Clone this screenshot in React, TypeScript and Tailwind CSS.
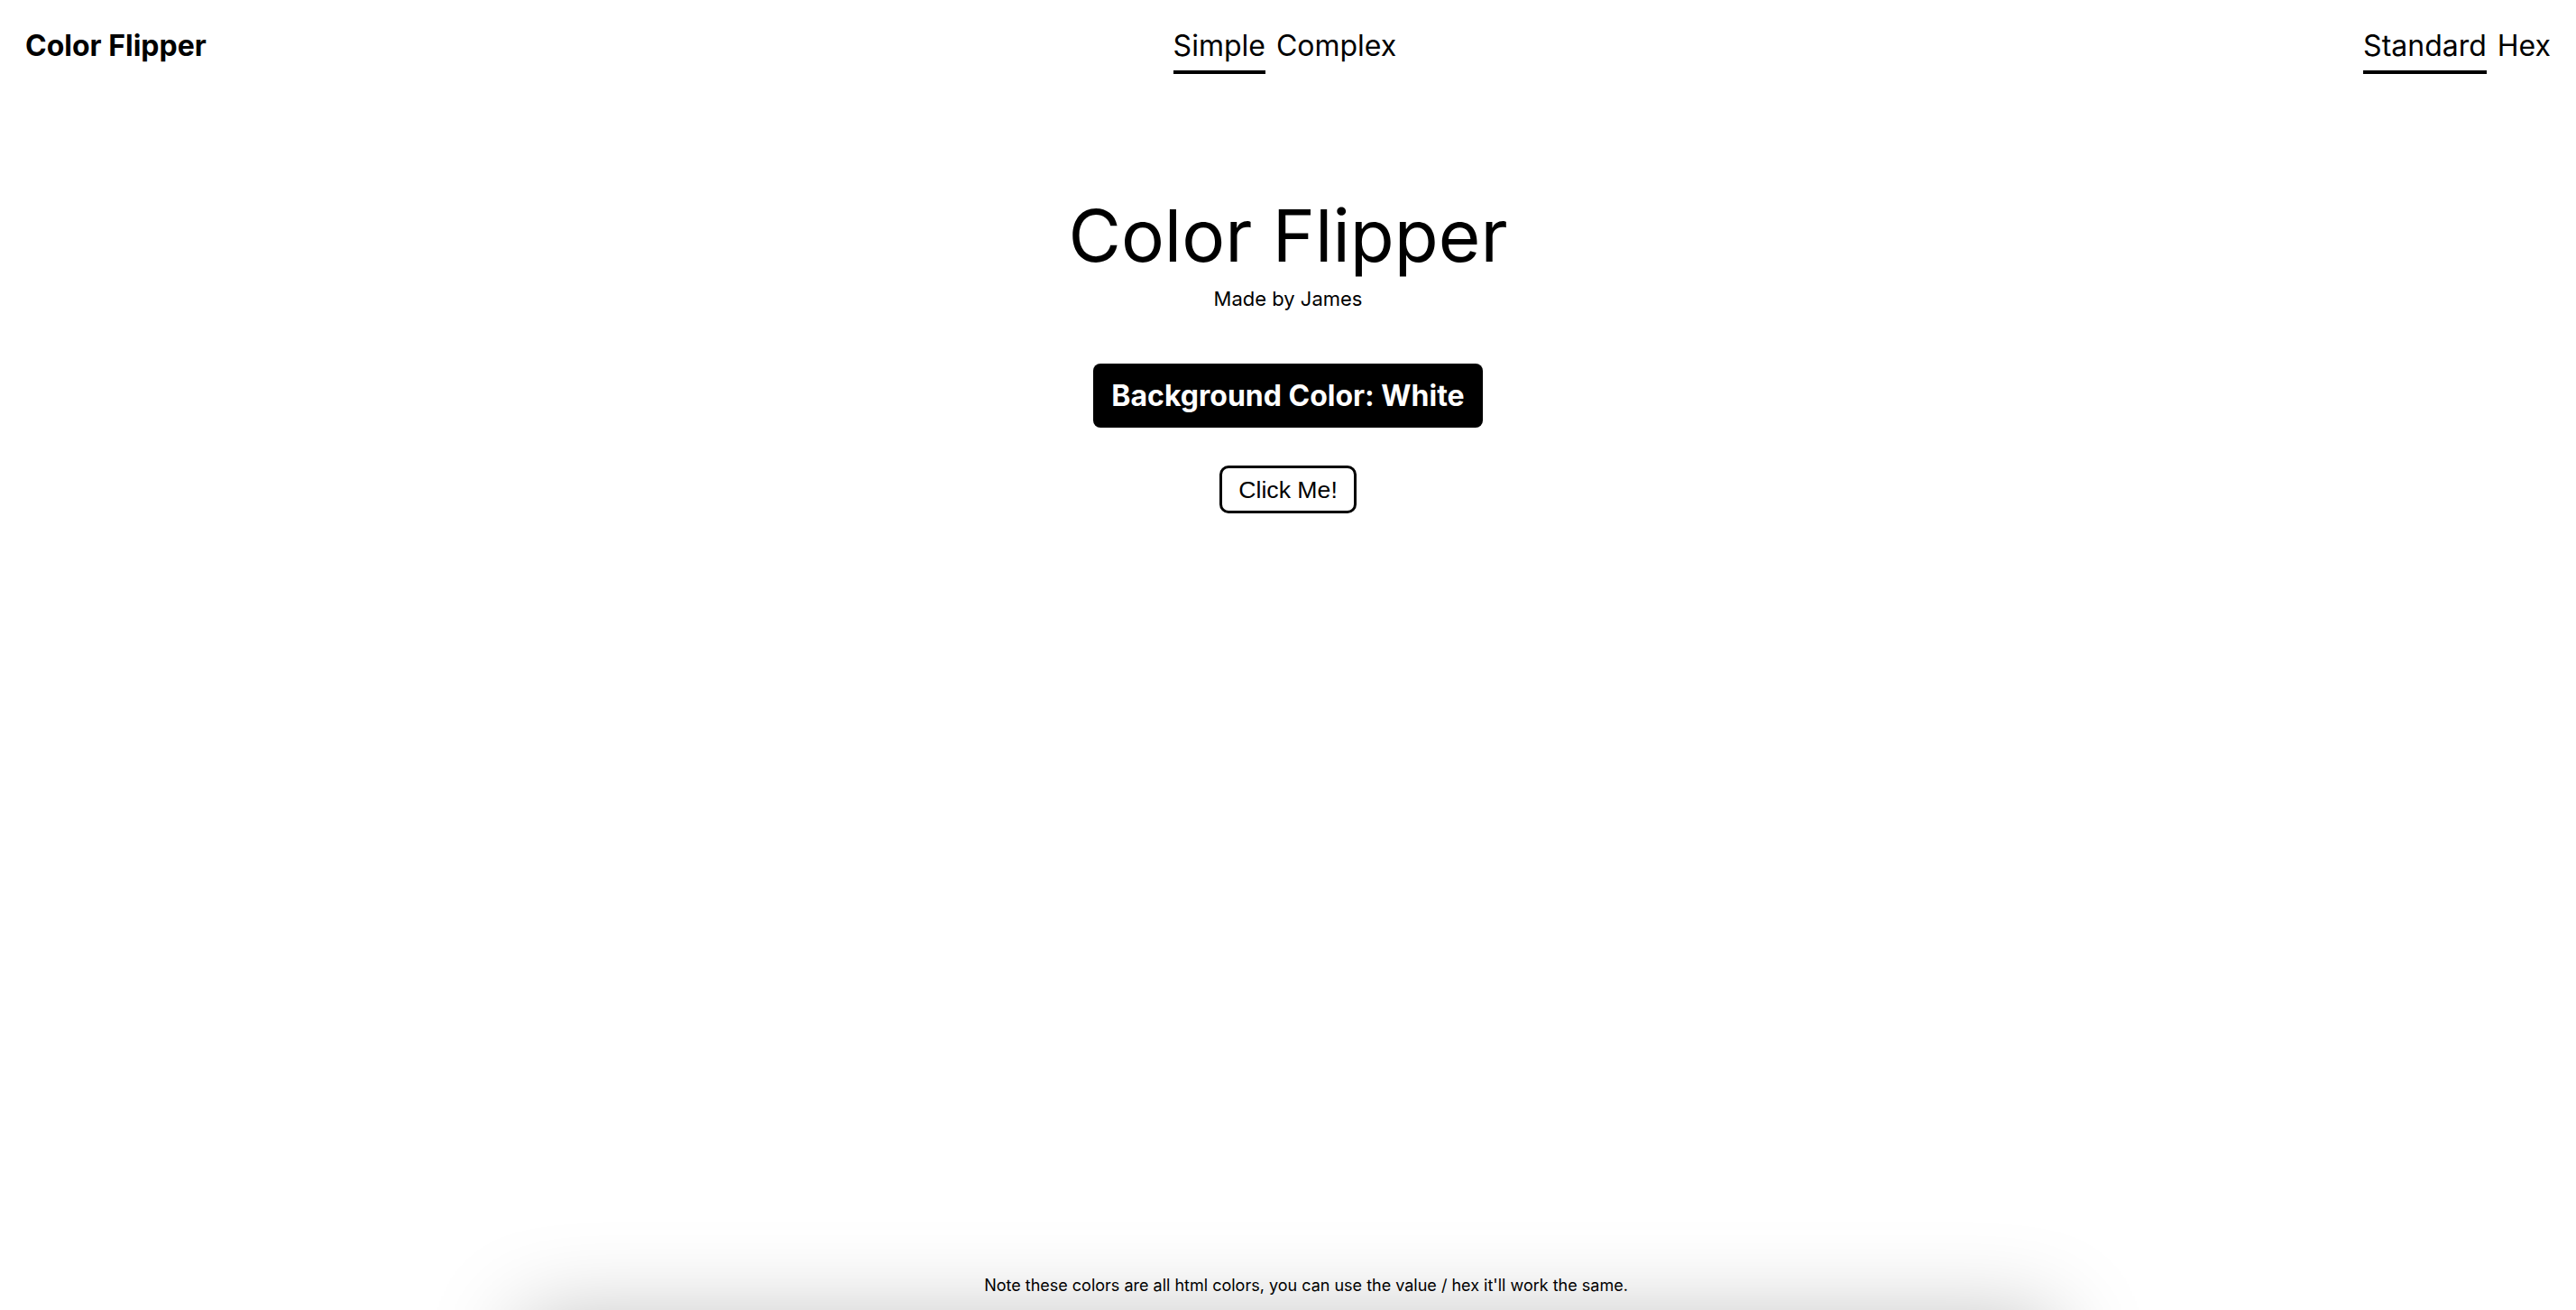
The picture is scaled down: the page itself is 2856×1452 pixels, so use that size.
import React, { useState } from 'react';

const colors = ['White', 'Black', 'Red', 'Green', 'Blue', 'Orange', 'Purple'];

const NavTab = ({
  label,
  active,
  onClick,
}: {
  label: string;
  active: boolean;
  onClick: () => void;
}) => (
  <button
    onClick={onClick}
    className={`text-[32px] leading-[48px] pb-[3px] border-b-4 ${
      active ? 'border-black' : 'border-transparent'
    }`}
  >
    {label}
  </button>
);

const App = () => {
  const [mode, setMode] = useState('Simple');
  const [format, setFormat] = useState('Standard');
  const [colorIdx, setColorIdx] = useState(0);

  return (
    <div className="h-screen overflow-hidden flex flex-col bg-white text-black font-['Inter',sans-serif]">
      {/* Header */}
      <header className="flex items-start justify-between px-7 pt-[27px]">
        <h1 className="text-[32px] leading-[48px] font-bold">Color Flipper</h1>
        <nav className="flex gap-3">
          {['Simple', 'Complex'].map((m) => (
            <NavTab key={m} label={m} active={mode === m} onClick={() => setMode(m)} />
          ))}
        </nav>
        <nav className="flex gap-3">
          {['Standard', 'Hex'].map((f) => (
            <NavTab key={f} label={f} active={format === f} onClick={() => setFormat(f)} />
          ))}
        </nav>
      </header>

      {/* Main */}
      <main className="flex-1 flex flex-col items-center">
        <h2 className="mt-[139px] text-[80px] leading-[80px]">Color Flipper</h2>
        <p className="mt-[19px] text-[22px] leading-[22px]">Made by James</p>
        <div className="mt-[61px] bg-black text-white rounded-lg px-5 py-4 text-[32px] leading-[39px] font-bold">
          Background Color: {colors[colorIdx]}
        </div>
        <button
          onClick={() => setColorIdx((colorIdx + 1) % colors.length)}
          className="mt-[42px] w-[152px] h-[53px] flex items-center justify-center border-[3px] border-black rounded-[10px] bg-white text-[26.67px] font-['Liberation_Sans',Arial,sans-serif]"
        >
          Click Me!
        </button>
      </main>

      {/* Footer */}
      <footer className="relative flex justify-center pl-10 pb-[14px]">
        <p className="relative z-10 text-[18px] leading-[27px]">
          Note these colors are all html colors, you can use the value / hex it'll work the same.
        </p>
        <div className="absolute left-1/2 -translate-x-1/2 top-[calc(100%+8px)] w-[1700px] h-[200px] bg-white shadow-[0_0_100px_rgba(0,0,0,0.25)]" />
      </footer>
    </div>
  );
};

export default App;
